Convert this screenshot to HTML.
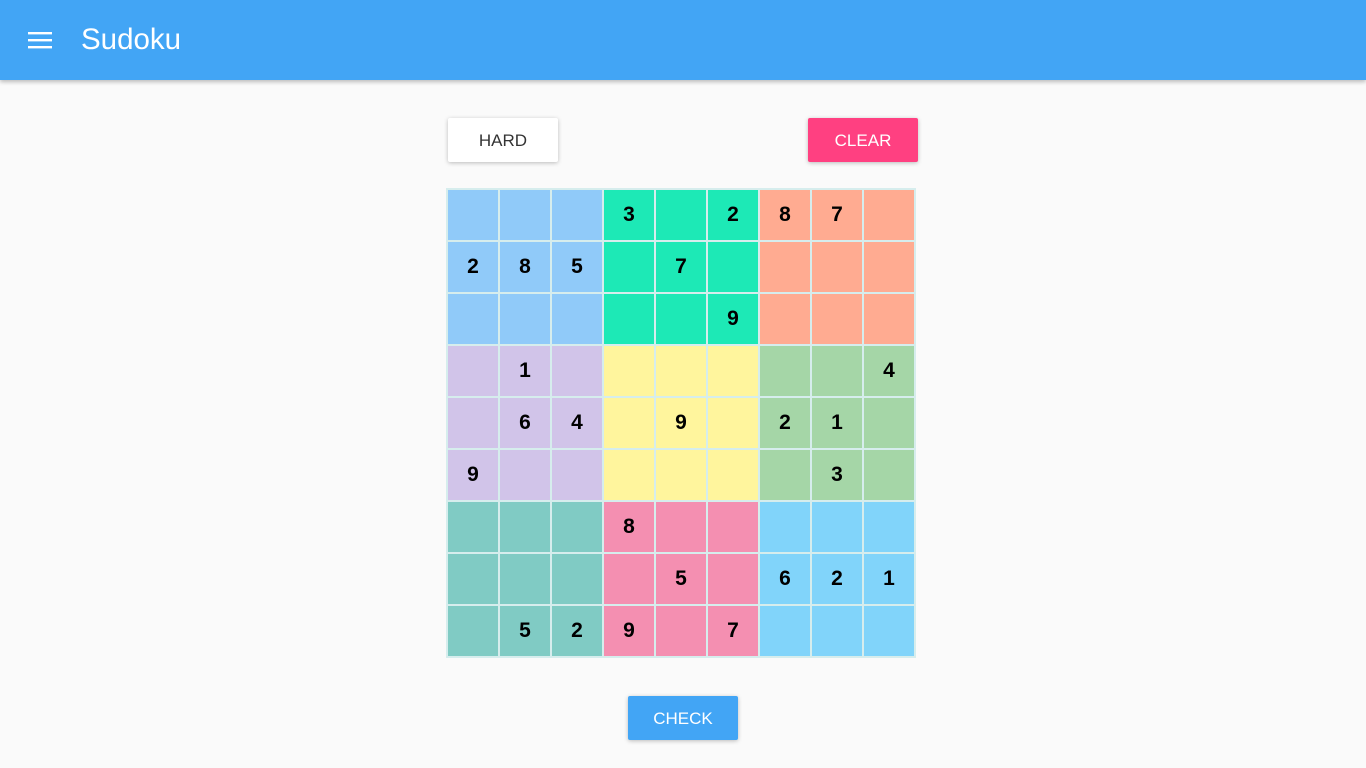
<!DOCTYPE html>
<html><head><style>
body{margin:0;width:1366px;height:768px;background:#fafafa;font-family:"Liberation Sans",sans-serif;overflow:hidden;position:relative}
.bar{position:absolute;left:0;top:0;width:1366px;height:80px;background:#42a5f5;box-shadow:0 2px 4px rgba(0,0,0,.25)}
.bar .t{position:absolute;left:81px;top:23px;color:#fff;font-size:29.5px}
.btn{position:absolute;height:44px;line-height:46px;text-align:center;font-size:17px;border-radius:2px;box-shadow:0 1px 4px rgba(0,0,0,.25)}
.grid{position:absolute;left:446px;top:188px;display:grid;grid-template-columns:repeat(9,50px);grid-auto-rows:50px;gap:2px;padding:2px;background:#d6eded}
.grid div{display:flex;align-items:center;justify-content:center;font-weight:bold;font-size:21px;color:#000}
</style></head><body>
<div class="bar"><svg style="position:absolute;left:28px;top:30px" width="24" height="20"><rect x="0" y="2" width="24" height="2.4" fill="#fff"/><rect x="0" y="9" width="24" height="2.4" fill="#fff"/><rect x="0" y="16" width="24" height="2.4" fill="#fff"/></svg><div class="t">Sudoku</div></div>
<div class="btn" style="left:448px;top:118px;width:110px;background:#fff;color:#333">HARD</div>
<div class="btn" style="left:808px;top:118px;width:110px;background:#ff4081;color:#fff">CLEAR</div>
<div class="grid" id="g"></div>
<div class="btn" style="left:628px;top:696px;width:110px;background:#42a5f5;color:#fff">CHECK</div>
<script>
var v=["...3.287.","285.7....",".....9...",".1......4",".64.9.21.","9......3.","...8.....","....5.621",".529.7..."];
var c=[["#90caf9","#1de9b6","#ffab91"],["#d1c4e9","#fff59d","#a5d6a7"],["#80cbc4","#f48fb1","#81d4fa"]];
var h="";for(var r=0;r<9;r++)for(var k=0;k<9;k++){var ch=v[r][k];h+='<div style="background:'+c[Math.floor(r/3)][Math.floor(k/3)]+'">'+(ch=="."?"":ch)+'</div>';}
document.getElementById("g").innerHTML=h;
</script>
</body></html>
